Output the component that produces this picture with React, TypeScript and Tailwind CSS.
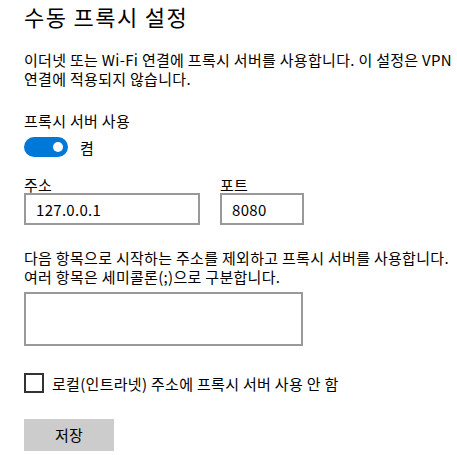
import React, { useState } from 'react';

export default function App() {
  const [enabled, setEnabled] = useState(true);
  const [bypassLocal, setBypassLocal] = useState(false);

  return (
    <div
      className="w-[457px] h-[455px] bg-white text-black overflow-hidden pl-6 tracking-[0.3px]"
      style={{ fontFamily: '"Noto Sans CJK KR", "Noto Sans", sans-serif' }}
    >
      <h1 className="text-[22px] leading-[28px] pt-[2px] tracking-[1.4px] font-normal">수동 프록시 설정</h1>

      <p className="mt-[20px] text-[15px] leading-[19px] whitespace-nowrap">
        이더넷 또는 Wi-Fi 연결에 프록시 서버를 사용합니다. 이 설정은 VPN
        <br />
        연결에 적용되지 않습니다.
      </p>

      <div className="mt-[23px] text-[15px] leading-[19px]">프록시 서버 사용</div>
      <div className="mt-[7px] flex items-center gap-3">
        <button
          onClick={() => setEnabled(!enabled)}
          className={`w-[44px] h-[20px] rounded-full flex items-center px-[5px] ${
            enabled ? 'bg-[#0078d7] justify-end' : 'bg-white border-2 border-[#333] justify-start'
          }`}
        >
          <span className={`w-[10px] h-[10px] rounded-full ${enabled ? 'bg-white' : 'bg-[#333]'}`} />
        </button>
        <span className="text-[15px] leading-[19px]">{enabled ? '켬' : '끔'}</span>
      </div>

      <div className="mt-[19px] flex gap-5">
        <div className="flex flex-col">
          <label className="text-[15px] leading-[17px]">주소</label>
          <input
            defaultValue="127.0.0.1"
            className="w-[176px] h-[32px] border-2 border-[#999] px-[10px] text-[15px] outline-none"
          />
        </div>
        <div className="flex flex-col">
          <label className="text-[15px] leading-[17px]">포트</label>
          <input
            defaultValue="8080"
            className="w-[84px] h-[32px] border-2 border-[#999] px-[10px] text-[15px] outline-none"
          />
        </div>
      </div>

      <p className="mt-[23px] text-[15px] leading-[19px] whitespace-nowrap">
        다음 항목으로 시작하는 주소를 제외하고 프록시 서버를 사용합니다.
        <br />
        여러 항목은 세미콜론(;)으로 구분합니다.
      </p>
      <textarea className="mt-[6px] block w-[279px] h-[54px] border-2 border-[#999] resize-none outline-none" />

      <label className="mt-[27px] flex items-center gap-2 text-[15px] leading-[19px]">
        <span
          onClick={() => setBypassLocal(!bypassLocal)}
          className="w-[20px] h-[20px] border-2 border-[#333] flex items-center justify-center"
        >
          {bypassLocal && <span className="w-[10px] h-[10px] bg-[#333]" />}
        </span>
        로컬(인트라넷) 주소에 프록시 서버 사용 안 함
      </label>

      <button className="mt-[26px] w-[90px] h-[32px] bg-[#cccccc] text-[15px]">저장</button>
    </div>
  );
}
